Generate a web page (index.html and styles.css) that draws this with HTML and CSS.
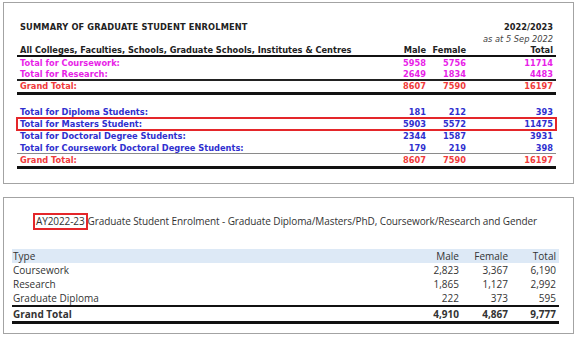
FILE: index.html
```html
<!DOCTYPE html>
<html>
<head>
<meta charset="utf-8">
<link rel="stylesheet" href="styles.css">
</head>
<body>
<div class="panel p1">
  <div class="row title-row"><span class="lbl">SUMMARY OF GRADUATE STUDENT ENROLMENT</span><span></span><span></span><span class="num">2022/2023</span></div>
  <div class="row asat-row"><span></span><span></span><span></span><span class="num asat">as at 5 Sep 2022</span></div>
  <div class="row head-row"><span class="lbl">All Colleges, Faculties, Schools, Graduate Schools, Institutes &amp; Centres</span><span class="num">Male</span><span class="num">Female</span><span class="num">Total</span></div>
  <div class="row mag"><span class="lbl">Total for Coursework:</span><span class="num">5958</span><span class="num">5756</span><span class="num">11714</span></div>
  <div class="row mag sep2"><span class="lbl">Total for Research:</span><span class="num">2649</span><span class="num">1834</span><span class="num">4483</span></div>
  <div class="row red sep3"><span class="lbl">Grand Total:</span><span class="num">8607</span><span class="num">7590</span><span class="num">16197</span></div>
  <div class="row blue gap"><span class="lbl">Total for Diploma Students:</span><span class="num">181</span><span class="num">212</span><span class="num">393</span></div>
  <div class="row blue hl"><span class="lbl">Total for Masters Student:</span><span class="num">5903</span><span class="num">5572</span><span class="num">11475</span></div>
  <div class="row blue tall"><span class="lbl">Total for Doctoral Degree Students:</span><span class="num">2344</span><span class="num">1587</span><span class="num">3931</span></div>
  <div class="row blue sepg"><span class="lbl">Total for Coursework Doctoral Degree Students:</span><span class="num">179</span><span class="num">219</span><span class="num">398</span></div>
  <div class="row red sep3 last"><span class="lbl">Grand Total:</span><span class="num">8607</span><span class="num">7590</span><span class="num">16197</span></div>
</div>
<div class="panel p2">
  <div class="p2-title"><span class="ay">AY2022-23</span>Graduate Student Enrolment - Graduate Diploma/Masters/PhD, Coursework/Research and Gender</div>
  <div class="t2">
    <div class="r2 h2"><span>Type</span><span class="num">Male</span><span class="num">Female</span><span class="num">Total</span></div>
    <div class="r2"><span>Coursework</span><span class="num">2,823</span><span class="num">3,367</span><span class="num">6,190</span></div>
    <div class="r2"><span>Research</span><span class="num">1,865</span><span class="num">1,127</span><span class="num">2,992</span></div>
    <div class="r2 b2"><span>Graduate Diploma</span><span class="num">222</span><span class="num">373</span><span class="num">595</span></div>
    <div class="r2 gt b3"><span>Grand Total</span><span class="num">4,910</span><span class="num">4,867</span><span class="num">9,777</span></div>
  </div>
</div>
</body>
</html>
```
FILE: styles.css
```css
html, body { margin: 0; padding: 0; background: #fff; }
body { width: 576px; height: 339px; overflow: hidden; }

.panel {
  box-sizing: border-box;
  width: 571px;
  margin-left: 3px;
  border: 1px solid #a3a3a3;
  background: #fff;
}
.p1 {
  margin-top: 2px;
  height: 182px;
  padding: 18px 17px 0 13px;
  font-family: "DejaVu Sans", sans-serif;
  font-weight: bold;
  font-size: 8.25px;
  color: #222;
}
.row {
  box-sizing: border-box;
  display: grid;
  grid-template-columns: 1fr 40px 40px 87px;
  height: 12px;
  line-height: 12px;
  white-space: nowrap;
}
.row > span { padding: 0 3px; }
.row .num { text-align: right; }
.title-row .lbl { letter-spacing: 0.15px; }
.asat { font-weight: normal; font-style: italic; color: #444; }
.head-row { border-bottom: 2px solid #111; height: 12px; line-height: 10px; }
.mag { color: #e81ee8; }
.red { color: #f03a3a; }
.blue { color: #2f2fcf; }
.sep2 { border-bottom: 2px solid #222; height: 12px; line-height: 10px; }
.sep3 { border-bottom: 3px solid #111; height: 14px; line-height: 11px; }
.sepg { border-bottom: 1px solid #8a8a8a; height: 11px; line-height: 10px; }
.tall { height: 13px; line-height: 12px; }
.last { height: 15px; line-height: 12px; }
.gap { margin-top: 11px; }
.hl { outline: 2px solid #e4262a; outline-offset: -1px; }

.p2 {
  margin-top: 13px;
  height: 137px;
  padding: 15px 14px 0 8px;
  font-family: "Open Sans", sans-serif;
  font-size: 10px;
  color: #333;
}
.p2-title {
  height: 17px;
  line-height: 17px;
  padding-left: 21px;
  white-space: nowrap;
  letter-spacing: -0.1px;
}
.ay {
  display: inline-block;
  box-sizing: border-box;
  height: 17px;
  border: 2px solid #e4262a;
  padding: 0 1px;
  line-height: 13px;
  margin-right: 0;
  vertical-align: top;
}
.t2 { margin-top: 19px; }
.r2 {
  display: grid;
  grid-template-columns: 1fr 48px 49px 48px;
  height: 14px;
  line-height: 14px;
  padding: 0 3px 0 1px;
}
.r2 .num { text-align: right; }
.h2 { background: #dde9f6; }
.b2 { border-bottom: 2px solid #111; }
.gt { font-weight: bold; }
.b3 { border-bottom: 3px solid #111; }
```
